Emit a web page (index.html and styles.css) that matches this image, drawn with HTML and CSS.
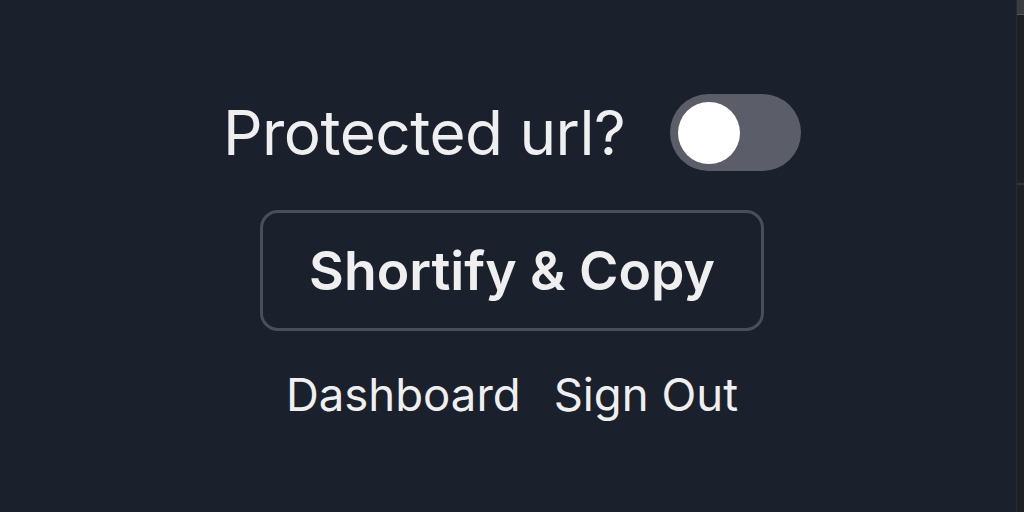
FILE: index.html
```html
<!DOCTYPE html>
<html lang="en">
<head>
<meta charset="utf-8">
<title>Shortify</title>
<link rel="stylesheet" href="styles.css">
</head>
<body>
<main class="popup">
  <div class="protect-row">
    <span class="protect-label">Protected url?</span>
    <span class="toggle"><span class="knob"></span></span>
  </div>
  <button class="shortify-btn" type="button">Shortify &amp; Copy</button>
  <nav class="links">
    <a class="link" href="#">Dashboard</a>
    <a class="link" href="#">Sign Out</a>
  </nav>
</main>
<div class="scrollbar"><div class="thumb"></div><div class="mark"></div></div>
</body>
</html>
```
FILE: styles.css
```css
html, body {
  margin: 0;
  padding: 0;
  width: 1024px;
  height: 512px;
  overflow: hidden;
  background: #1b202d;
  font-family: "Inter", "Noto Sans", sans-serif;
  color: #efefef;
}
.popup {
  display: flex;
  flex-direction: column;
  align-items: center;
  padding-top: 94px;
}
.protect-row {
  display: flex;
  align-items: center;
  gap: 45px;
  height: 77px;
  padding-left: 0;
}
.protect-label {
  font-size: 62px;
  font-weight: 400;
  letter-spacing: -0.5px;
}
.toggle {
  width: 131px;
  height: 77px;
  border-radius: 39px;
  background: #5b5e68;
  display: flex;
  align-items: center;
  padding-left: 8px;
  box-sizing: border-box;
}
.knob {
  width: 62px;
  height: 62px;
  border-radius: 50%;
  background: #ffffff;
}
.shortify-btn {
  margin-top: 39px;
  width: 504px;
  height: 121px;
  box-sizing: border-box;
  border: 3px solid #4a4e59;
  border-radius: 18px;
  background: #1b202d;
  color: #efefef;
  font-family: "Inter", "Noto Sans", sans-serif;
  font-size: 53.5px;
  font-weight: 600;
  padding: 0;
}
.links {
  display: flex;
  gap: 33px;
  margin-top: 36px;
}
.link {
  color: #efefef;
  text-decoration: none;
  font-size: 45.5px;
  font-weight: 400;
}
.scrollbar {
  position: absolute;
  top: 0;
  right: 0;
  width: 8px;
  height: 512px;
  background: #1f2023;
  border-left: 1px solid #2a2b2f;
  box-sizing: border-box;
}
.thumb {
  height: 14px;
  background: #3b3c40;
  border-bottom: 1px solid #55565a;
}
.mark {
  margin-top: 168px;
  height: 2px;
  background: #35363a;
}
```
